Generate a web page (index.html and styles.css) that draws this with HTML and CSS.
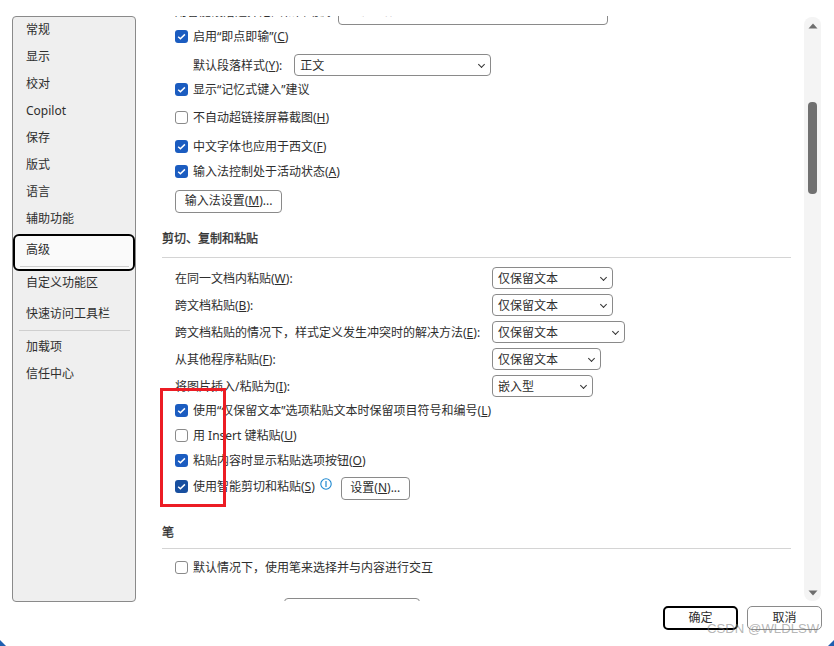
FILE: index.html
```html
<!DOCTYPE html>
<html lang="zh">
<head>
<meta charset="utf-8">
<title>Word 选项</title>
<link rel="stylesheet" href="styles.css">
</head>
<body>
<div class="window">
  <div class="main">
    <nav class="side">
      <div class="nav">常规</div>
      <div class="nav">显示</div>
      <div class="nav">校对</div>
      <div class="nav">Copilot</div>
      <div class="nav">保存</div>
      <div class="nav">版式</div>
      <div class="nav">语言</div>
      <div class="nav">辅助功能</div>
      <div class="nav selected"><span>高级</span></div>
      <div class="nav n-custom">自定义功能区</div>
      <div class="nav n-quick">快速访问工具栏</div>
      <div class="side-rule"></div>
      <div class="nav n-addin">加载项</div>
      <div class="nav">信任中心</div>
    </nav>
    <section class="pane">
      <div class="row r-top"><span class="cut">用智能段落选择范围和自动调</span><span class="input">根据段落的编号和项目符号样式</span></div>
      <label class="row"><span class="cb on"></span><span>启用“即点即输”(<u>C</u>)</span></label>
      <div class="row m7 indent"><span>默认段落样式(<u>Y</u>):</span><span class="select s-style">正文</span></div>
      <label class="row m2"><span class="cb on"></span><span>显示“记忆式键入”建议</span></label>
      <label class="row m6"><span class="cb"></span><span>不自动超链接屏幕截图(<u>H</u>)</span></label>
      <label class="row m7"><span class="cb on"></span><span>中文字体也应用于西文(<u>F</u>)</span></label>
      <label class="row m3"><span class="cb on"></span><span>输入法控制处于活动状态(<u>A</u>)</span></label>
      <div class="btn b-ime">输入法设置(<u>M</u>)...</div>
      <h2 class="head h-cut">剪切、复制和粘贴</h2>
      <div class="grid">
        <span>在同一文档内粘贴(<u>W</u>):</span><span class="select s1">仅保留文本</span>
        <span>跨文档粘贴(<u>B</u>):</span><span class="select s1">仅保留文本</span>
        <span>跨文档粘贴的情况下，样式定义发生冲突时的解决方法(<u>E</u>):</span><span class="select s2">仅保留文本</span>
        <span>从其他程序粘贴(<u>F</u>):</span><span class="select s3">仅保留文本</span>
        <span>将图片插入/粘贴为(<u>I</u>):</span><span class="select s4">嵌入型</span>
      </div>
      <label class="row c1"><span class="cb on"></span><span>使用“仅保留文本”选项粘贴文本时保留项目符号和编号(<u>L</u>)</span></label>
      <label class="row c2"><span class="cb"></span><span>用 Insert 键粘贴(<u>U</u>)</span></label>
      <label class="row c2"><span class="cb on"></span><span>粘贴内容时显示粘贴选项按钮(<u>O</u>)</span></label>
      <div class="row c3"><span class="cb on dark"></span><span>使用智能剪切和粘贴(<u>S</u>)</span>
        <svg class="info" viewBox="0 0 12 12" width="12" height="12"><circle cx="6" cy="6" r="5.2" fill="none" stroke="#1e88d0" stroke-width="1.1"/><rect x="5.4" y="3" width="1.2" height="6" fill="#1e88d0"/></svg>
        <span class="btn b-set">设置(<u>N</u>)...</span>
      </div>
      <h2 class="head h-pen">笔</h2>
      <label class="row m7"><span class="cb"></span><span>默认情况下，使用笔来选择并与内容进行交互</span></label>
      <div class="btn b-cut"></div>
    </section>
    <div class="scrollbar">
      <svg class="arrow" viewBox="0 0 10 6" width="10" height="6"><path d="M5 .5 9.5 5.5H.5Z" fill="#6e6e6e"/></svg>
      <div class="thumb"></div>
      <svg class="arrow down" viewBox="0 0 10 6" width="10" height="6"><path d="M5 5.5 9.5 .5H.5Z" fill="#6e6e6e"/></svg>
    </div>
  </div>
  <footer class="foot">
    <div class="fbtn primary">确定</div>
    <div class="fbtn">取消</div>
  </footer>
</div>
<div class="red"></div>
<div class="mark">CSDN @WLDLSW</div>
<div class="corner c-left"></div>
<div class="corner c-right"></div>
</body>
</html>
```
FILE: styles.css
```css
* { box-sizing: border-box; }
html, body { margin: 0; height: 646px; overflow: hidden; background: #fff; }
body {
  position: relative;
  font: 12px/22px "Noto Sans", "Noto Sans CJK SC", sans-serif;
  color: #2e2e2e;
}
u { text-underline-offset: 1px; text-decoration-thickness: 1px; }
.window { padding: 16px 0 0 12px; }
.main { display: flex; height: 585px; }

/* sidebar */
.side {
  width: 124px; height: 586px; flex: none;
  background: #efefef; border: 1px solid #8a8a8a; border-radius: 4px;
}
.nav { height: 27px; padding-left: 13px; line-height: 26px; }
.nav.selected {
  position: relative; width: 122px; height: 37px; margin: 1px 0 0 0; padding-left: 11px;
  background: #fafafa; border: 2px solid #000; border-radius: 6px; line-height: 27px;
}
.nav.selected::after {
  content: ""; position: absolute; left: 5px; right: 4px; bottom: 2px; height: 1px; background: #cfcfcf;
}
.nav.n-custom { height: 25px; line-height: 23px; }
.n-quick { margin-top: 5px; height: 26px; }
.side-rule { height: 1px; margin: 3px 5px 0 6px; background: #cfcfcf; }
.n-addin { margin-top: 3px; }

/* content pane */
.pane { width: 655px; flex: none; padding: 0 0 0 26px; overflow: hidden; }
.row { display: flex; align-items: center; height: 22px; padding-left: 13px; white-space: nowrap; }
.row > span:not([class]), .grid > span:not([class]) { padding-top: 2px; }
.r-top { margin-top: -13px; }
.r-top .cut { width: 163px; flex: none; overflow: hidden; margin-top: -4px; }
.input {
  display: block; width: 270px; height: 22px; padding-left: 6px;
  border: 1px solid #8a8a8a; border-radius: 4px; line-height: 14px;
}
.cb {
  flex: none; width: 13px; height: 13px; margin-right: 5px;
  border: 1px solid #8a8a8a; border-radius: 3px; background: #fff;
}
.cb.on {
  border: 0;
  background: #1b5cc0 url("data:image/svg+xml,%3Csvg xmlns='http://www.w3.org/2000/svg' width='13' height='13'%3E%3Cpath d='M3.2 6.8 5.4 8.8 9.9 4.4' fill='none' stroke='%23fff' stroke-width='1.5'/%3E%3C/svg%3E") center no-repeat;
}
.cb.dark { background-color: #184f9f; }
.m2 { margin-top: 2px; }
.m3 { margin-top: 3px; }
.m6 { margin-top: 6px; }
.m7 { margin-top: 7px; }
.indent { padding-left: 31px; }
.select {
  display: block; position: relative; height: 22px; padding-left: 5px;
  border: 1px solid #8a8a8a; border-radius: 4px; background: #fff; line-height: 22px;
}
.select::after {
  content: ""; position: absolute; right: 6px; top: 7px; width: 4px; height: 4px;
  border-right: 1.2px solid #333; border-bottom: 1.2px solid #333; transform: rotate(45deg);
}
.s-style { width: 197px; margin-left: 12px; }
.s1 { width: 121px; }
.s2 { width: 133px; }
.s3 { width: 109px; }
.s4 { width: 101px; }
.btn {
  display: block; border: 1px solid #8a8a8a; border-radius: 4px; background: #fff;
  text-align: center; line-height: 20px;
}
.b-ime { width: 107px; height: 23px; margin: 8px 0 0 13px; }
.head {
  margin: 0; font-size: 12px; font-weight: 400; line-height: 24px;
  border-bottom: 1px solid #d4d4d4; -webkit-text-stroke: .3px #2e2e2e;
}
.h-cut { height: 31px; margin-top: 14px; }
.h-pen { height: 28px; margin-top: 23px; }
.grid {
  display: grid; grid-template-columns: 317px auto; grid-auto-rows: 22px; justify-content: start; justify-items: start;
  row-gap: 5px; margin-top: 9px; padding-left: 13px; align-items: center;
}
.c1 { margin-top: 2px; }
.c2 { margin-top: 3px; }
.c3 { margin-top: 3px; height: 24px; }
.info { margin: -4px 0 0 5px; flex: none; }
.b-set { width: 69px; height: 23px; margin: 5px 0 0 9px; flex: none; }
.b-cut { width: 136px; height: 22px; margin: 20px 0 0 122px; }

/* scrollbar */
.scrollbar {
  position: relative; width: 17px; height: 584px; margin: 1px 0 0 13px; flex: none;
  background: #f4f4f4; border-radius: 8px;
}
.arrow { position: absolute; left: 4px; top: 6px; }
.arrow.down { top: auto; bottom: 5px; }
.thumb { position: absolute; left: 4px; top: 85px; width: 9px; height: 92px; background: #707070; border-radius: 4px; }

/* footer */
.foot { display: flex; gap: 9px; justify-content: flex-end; padding: 5px 12px 0 0; }
.fbtn {
  width: 75px; height: 24px; border: 1px solid #8a8a8a; border-radius: 5px;
  text-align: center; line-height: 22px; background: #fff;
}
.fbtn.primary { border: 2px solid #000; line-height: 20px; }

/* overlays */
.red { position: absolute; left: 160px; top: 388px; width: 66px; height: 119px; border: 3px solid #ec1c24; }
.mark {
  position: absolute; left: 707px; top: 620px; width: 120px; font: 13.2px/18px "Liberation Sans", sans-serif;
  color: rgba(120,120,120,.55); white-space: nowrap;
}
.corner { position: absolute; width: 6px; height: 6px; background: #1f5fb0; }
.c-left { left: 0; top: 640px; clip-path: polygon(0 0, 100% 100%, 0 100%); }
.c-right { left: 828px; top: 640px; clip-path: polygon(100% 0, 100% 100%, 0 100%); }
```
